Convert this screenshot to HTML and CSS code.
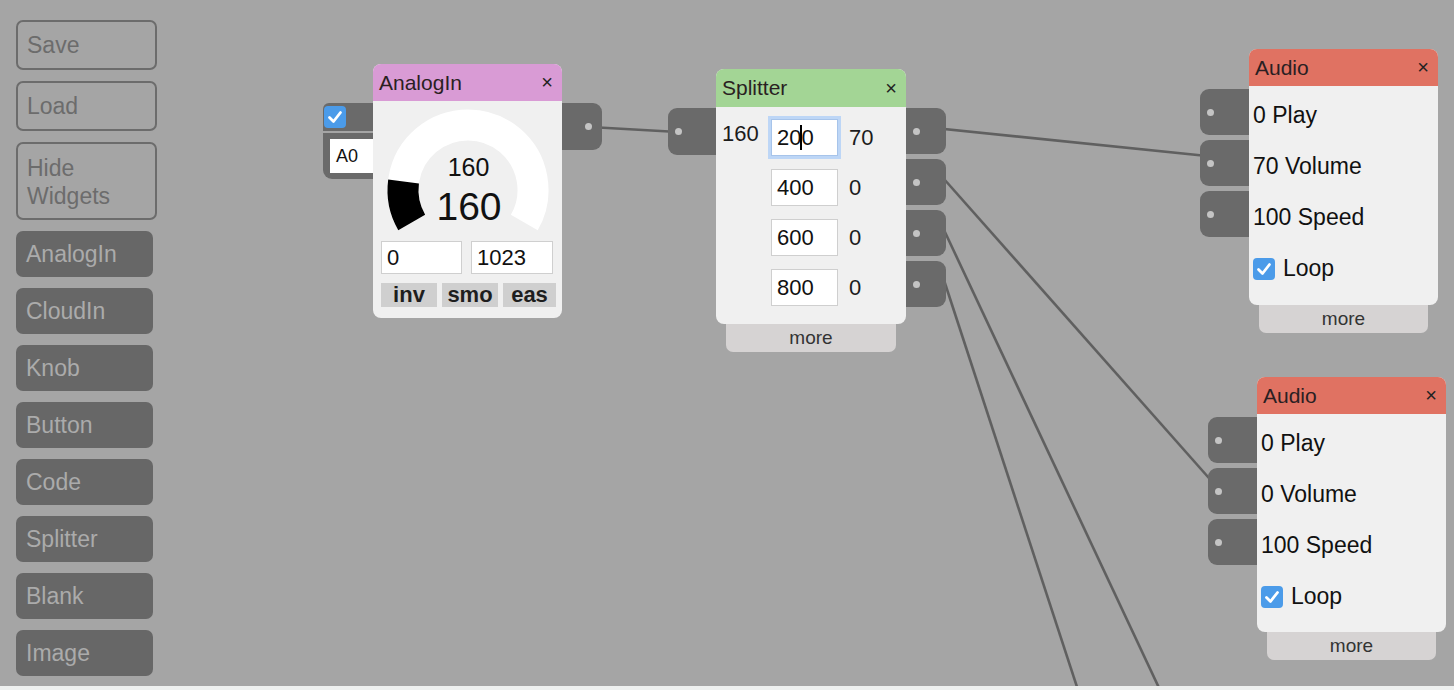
FILE: index.html
```html
<!DOCTYPE html>
<html>
<head>
<meta charset="utf-8">
<link rel="stylesheet" href="styles.css">
</head>
<body>
<div class="workspace">
  <div class="sidebar">
    <div class="btn outline">Save</div>
    <div class="btn outline">Load</div>
    <div class="btn outline tall">Hide<br>Widgets</div>
    <div class="btn dark">AnalogIn</div>
    <div class="btn dark">CloudIn</div>
    <div class="btn dark">Knob</div>
    <div class="btn dark">Button</div>
    <div class="btn dark">Code</div>
    <div class="btn dark">Splitter</div>
    <div class="btn dark">Blank</div>
    <div class="btn dark">Image</div>
  </div>

  <svg class="wires" width="1454" height="686" viewBox="0 0 1454 686">
    <line x1="590" y1="127" x2="678" y2="132"/>
    <line x1="915" y1="126" x2="1212" y2="156.5"/>
    <line x1="940" y1="174.5" x2="1216" y2="486"/>
    <line x1="940" y1="221.5" x2="1160" y2="690"/>
    <line x1="940" y1="268" x2="1078" y2="690"/>
  </svg>

  <!-- AnalogIn ports -->
  <div class="ports in-left a-in">
    <div class="plate short"><span class="check"><svg width="22" height="22" viewBox="0 0 22 22"><path d="M5.5 11.5 L9.5 15.5 L16.5 6.5"/></svg></span></div>
    <div class="plate pin"><div class="pin-input">A0</div></div>
  </div>
  <div class="ports out-right a-out">
    <div class="plate dotright"><span class="dot"></span></div>
  </div>

  <!-- Splitter ports -->
  <div class="ports in-left s-in">
    <div class="plate"><span class="dot"></span></div>
  </div>
  <div class="ports out-right s-out">
    <div class="plate"><span class="dot"></span></div>
    <div class="plate"><span class="dot"></span></div>
    <div class="plate"><span class="dot"></span></div>
    <div class="plate"><span class="dot"></span></div>
  </div>

  <!-- Audio ports -->
  <div class="ports in-left au1-in">
    <div class="plate"><span class="dot"></span></div>
    <div class="plate"><span class="dot"></span></div>
    <div class="plate"><span class="dot"></span></div>
  </div>
  <div class="ports in-left au2-in">
    <div class="plate"><span class="dot"></span></div>
    <div class="plate"><span class="dot"></span></div>
    <div class="plate"><span class="dot"></span></div>
  </div>

  <!-- AnalogIn node -->
  <div class="node analog">
    <div class="card">
      <div class="head pink"><span>AnalogIn</span><span class="close">×</span></div>
      <div class="body">
        <div class="gauge">
          <svg width="189" height="140" viewBox="0 0 189 140">
            <path class="arc-bg" d="M38.71 121.5 A65 65 0 1 1 151.29 121.5"/>
            <path class="arc-val" d="M38.71 121.5 A65 65 0 0 1 30.56 80.52"/>
          </svg>
          <span class="g-small">160</span>
          <span class="g-big">160</span>
        </div>
        <div class="range">
          <div class="field w81">0</div>
          <div class="field w82">1023</div>
        </div>
        <div class="opts">
          <div class="opt w56">inv</div>
          <div class="opt w56">smo</div>
          <div class="opt w53">eas</div>
        </div>
      </div>
    </div>
  </div>

  <!-- Splitter node -->
  <div class="node splitter">
    <div class="card">
      <div class="head green"><span>Splitter</span><span class="close">×</span></div>
      <div class="body split-grid">
        <div class="inval">160</div>
        <div class="field sbox focus">20<span class="caret"></span>0</div>
        <div class="outval">70</div>
        <div></div>
        <div class="field sbox">400</div>
        <div class="outval">0</div>
        <div></div>
        <div class="field sbox">600</div>
        <div class="outval">0</div>
        <div></div>
        <div class="field sbox">800</div>
        <div class="outval">0</div>
      </div>
    </div>
    <div class="more">more</div>
  </div>

  <!-- Audio node 1 -->
  <div class="node audio1">
    <div class="card">
      <div class="head red"><span>Audio</span><span class="close">×</span></div>
      <div class="body audio-body">
        <div class="row">0 Play</div>
        <div class="row">70 Volume</div>
        <div class="row">100 Speed</div>
        <div class="row"><span class="check"><svg width="22" height="22" viewBox="0 0 22 22"><path d="M5.5 11.5 L9.5 15.5 L16.5 6.5"/></svg></span>Loop</div>
      </div>
    </div>
    <div class="more">more</div>
  </div>

  <!-- Audio node 2 -->
  <div class="node audio2">
    <div class="card">
      <div class="head red"><span>Audio</span><span class="close">×</span></div>
      <div class="body audio-body">
        <div class="row">0 Play</div>
        <div class="row">0 Volume</div>
        <div class="row">100 Speed</div>
        <div class="row"><span class="check"><svg width="22" height="22" viewBox="0 0 22 22"><path d="M5.5 11.5 L9.5 15.5 L16.5 6.5"/></svg></span>Loop</div>
      </div>
    </div>
    <div class="more">more</div>
  </div>
</div>
</body>
</html>
```

FILE: styles.css
```css
html, body {
  margin: 0;
  padding: 0;
}
body {
  background: #eef0ef;
  font-family: "Liberation Sans", Arial, Helvetica, sans-serif;
  color: #1c1c1c;
  width: 1454px;
  height: 690px;
  overflow: hidden;
}
.workspace {
  position: relative;
  width: 1454px;
  height: 686px;
  background: #a5a5a5;
  overflow: hidden;
}

/* sidebar */
.sidebar {
  display: flex;
  flex-direction: column;
  gap: 11px;
  padding: 20px 0 0 16px;
  width: 141px;
}
.btn {
  box-sizing: border-box;
  font-size: 23px;
  line-height: 28px;
  border-radius: 7px;
}
.btn.outline {
  width: 141px;
  height: 50px;
  border: 2px solid #6c6c6c;
  color: #6c6c6c;
  padding: 9px 9px;
}
.btn.outline.tall {
  height: 78px;
  padding-top: 10px;
}
.btn.dark {
  width: 137px;
  height: 46px;
  background: #676767;
  color: #ababab;
  padding: 9px 10px;
}

/* wires */
.wires {
  position: absolute;
  left: 0;
  top: 0;
}
.wires line {
  stroke: #606060;
  stroke-width: 2.6;
}

/* ports */
.ports {
  position: absolute;
  display: flex;
  flex-direction: column;
  gap: 5px;
}
.plate {
  position: relative;
  box-sizing: border-box;
  height: 46px;
  background: #6a6a6a;
  display: flex;
  align-items: center;
}
.in-left .plate {
  width: 58px;
  border-radius: 9px 0 0 9px;
  padding-left: 7px;
}
.out-right .plate {
  width: 48px;
  border-radius: 0 9px 9px 0;
  padding-left: 15px;
}
.dot {
  width: 7px;
  height: 7px;
  border-radius: 50%;
  background: #c4c4c4;
}
.a-in {
  left: 323px;
  top: 103px;
  gap: 2px;
}
.a-in .plate {
  width: 60px;
  padding-left: 1px;
}
.a-in .plate.short {
  height: 28px;
  border-radius: 6px 0 0 0;
}
.a-in .plate.pin {
  height: 46px;
  border-radius: 0 0 0 9px;
  padding-left: 7px;
}
.pin-input {
  box-sizing: border-box;
  width: 50px;
  height: 34px;
  background: #fff;
  font-size: 18px;
  line-height: 34px;
  padding-left: 6px;
  color: #111;
}
.a-out {
  left: 554px;
  top: 103px;
}
.a-out .plate.dotright {
  height: 47px;
  padding-left: 31px;
}
.s-in {
  left: 668px;
  top: 108px;
}
.s-in .plate {
  height: 47px;
}
.s-out {
  left: 898px;
  top: 108px;
}
.au1-in {
  left: 1200px;
  top: 89px;
}
.au2-in {
  left: 1208px;
  top: 417px;
}

/* checkbox */
.check {
  display: inline-flex;
  width: 22px;
  height: 22px;
  border-radius: 4px;
  background: #4b9be9;
  flex: none;
}
.check path {
  fill: none;
  stroke: #fff;
  stroke-width: 2.8;
  stroke-linecap: round;
  stroke-linejoin: round;
}

/* nodes */
.node {
  position: absolute;
  width: 189px;
}
.card {
  position: relative;
  z-index: 1;
  background: #f0f0f0;
  border-radius: 8px;
  overflow: hidden;
}
.head {
  height: 37px;
  display: flex;
  align-items: center;
  justify-content: space-between;
  padding: 0 9px 0 6px;
  font-size: 21px;
  color: #2a1f22;
}
.head .close {
  font-size: 20px;
  color: #222;
}
.pink { background: #d99bd5; }
.green { background: #a3d595; }
.red { background: #e07262; }

.more {
  position: relative;
  margin: -8px 10px 0;
  height: 36px;
  box-sizing: border-box;
  padding-top: 8px;
  background: #d6d3d3;
  border-radius: 0 0 7px 7px;
  text-align: center;
  font-size: 19px;
  line-height: 28px;
  color: #333;
}

/* analog */
.analog {
  left: 373px;
  top: 64px;
}
.analog .card {
  height: 254px;
}
.gauge {
  position: relative;
  height: 140px;
}
.gauge svg {
  display: block;
}
.arc-bg {
  fill: none;
  stroke: #ffffff;
  stroke-width: 31;
}
.arc-val {
  fill: none;
  stroke: #000;
  stroke-width: 31;
}
.g-small, .g-big {
  position: absolute;
  left: 0;
  right: 0;
  text-align: center;
  color: #111;
}
.g-small {
  top: 51px;
  font-size: 25px;
  line-height: 30px;
  padding-left: 2px;
}
.g-big {
  top: 83px;
  font-size: 39px;
  line-height: 46px;
  padding-left: 3px;
}
.range {
  display: flex;
  gap: 9px;
  padding-left: 8px;
}
.field {
  box-sizing: border-box;
  background: #fff;
  border: 1px solid #cfcfcf;
  font-size: 22px;
  color: #111;
}
.range .field {
  height: 33px;
  line-height: 31px;
  padding-left: 5px;
}
.w81 { width: 81px; }
.w82 { width: 82px; }
.opts {
  display: flex;
  gap: 5px;
  padding-left: 8px;
  margin-top: 9px;
}
.opt {
  height: 24px;
  line-height: 24px;
  background: #cfcfcf;
  font-weight: bold;
  font-size: 22px;
  text-align: center;
  color: #1e1e1e;
}
.w56 { width: 56px; }
.w53 { width: 53px; }

/* splitter */
.splitter {
  left: 716px;
  top: 69px;
  width: 190px;
}
.splitter .card {
  height: 255px;
}
.splitter .head {
  height: 38px;
}
.split-grid {
  display: grid;
  grid-template-columns: 38px 67px auto;
  grid-auto-rows: 37px;
  column-gap: 11px;
  row-gap: 13px;
  padding: 12px 0 0 6px;
  font-size: 22px;
}
.inval {
  line-height: 26px;
  padding-top: 2px;
}
.sbox {
  height: 37px;
  line-height: 35px;
  padding-left: 5px;
}
.sbox.focus {
  border-color: #a7c4ea;
  box-shadow: 0 0 0 3px #bdd6f6;
}
.caret {
  display: inline-block;
  width: 2px;
  height: 25px;
  background: #000;
  vertical-align: -5px;
  margin: 0 -1px;
}
.outval {
  line-height: 37px;
}

/* audio */
.audio1 {
  left: 1249px;
  top: 49px;
}
.audio1 .card {
  height: 256px;
}
.audio2 {
  left: 1257px;
  top: 377px;
}
.audio2 .card {
  height: 255px;
}
.audio-body {
  padding: 4px 0 0 4px;
}
.row {
  height: 51px;
  display: flex;
  align-items: center;
  gap: 8px;
  font-size: 23px;
  color: #111;
}
```
